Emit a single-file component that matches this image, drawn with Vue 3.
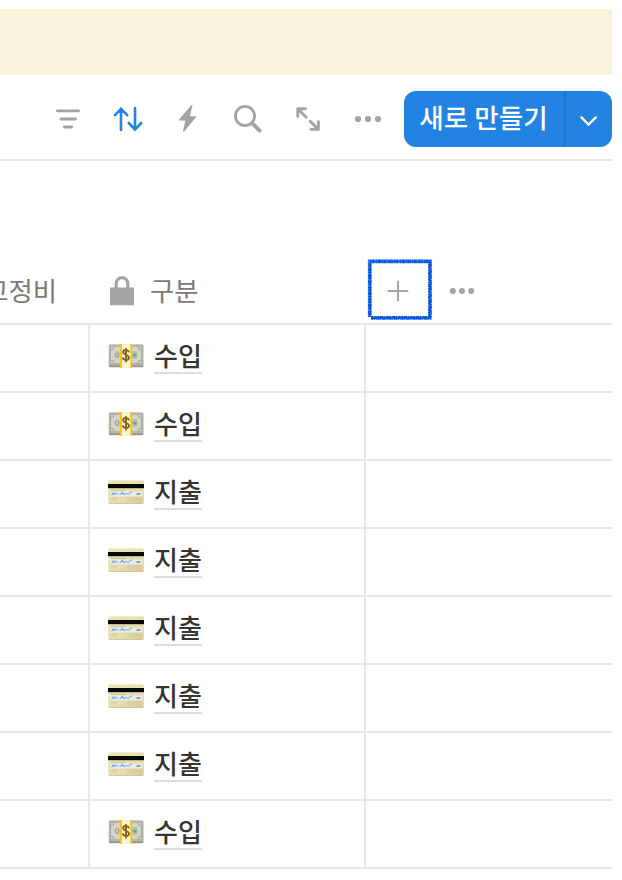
<script setup>
import {ref} from "vue"

const rows = ref([
  {id: 1, type: "수입"},
  {id: 2, type: "수입"},
  {id: 3, type: "지출"},
  {id: 4, type: "지출"},
  {id: 5, type: "지출"},
  {id: 6, type: "지출"},
  {id: 7, type: "지출"},
  {id: 8, type: "수입"},
])
</script>

<template>
  <div class="page">
    <div class="banner"></div>

    <div class="toolbar">
      <div class="toolbar__icons">
        <svg class="icon" viewBox="0 0 32 32">
          <path d="M5.4 7.8h21.2M8.9 16h14.6M12.4 24h7.2" stroke-width="2.8"/>
        </svg>
        <svg class="icon icon--active" viewBox="0 0 32 32">
          <path d="M9 27V5.6M3 12.2l6-6.4 6.2 6.4M23 5v21.8M16.8 20l6.2 6.6 6.2-6.6" stroke-width="2.6"/>
        </svg>
        <svg class="icon" viewBox="0 0 32 32">
          <path class="icon__fill" d="M19.3 2.2 7 16.6q-.4.9.5 1h5.9l-2.4 10.4q.3 1.3 1.2.4L24 14.2q.5-.9-.5-1h-5.7l2.7-10.4q-.2-1.1-1.2-.6z"/>
        </svg>
        <svg class="icon" viewBox="0 0 32 32">
          <circle cx="13" cy="13" r="9.6" stroke-width="2.8"/>
          <path d="m20.4 20.4 7.2 7.2" stroke-width="3.8"/>
        </svg>
        <svg class="icon" viewBox="0 0 32 32">
          <path d="M13.4 5.8H5.8v7.6M6 6l8.2 8.2M18.2 18.2l8.2 8.2M26.4 18.8v7.6h-7.6" stroke-width="2.9"/>
        </svg>
        <svg class="icon" viewBox="0 0 32 32">
          <g class="icon__fill">
            <circle cx="6" cy="16" r="3.1"/>
            <circle cx="16" cy="16" r="3.1"/>
            <circle cx="26" cy="16" r="3.1"/>
          </g>
        </svg>
      </div>
      <div class="new-button">
        <button class="new-button__main">새로 만들기</button>
        <button class="new-button__more">
          <svg width="20" height="14" viewBox="0 0 20 14">
            <path d="m2.4 3.4 7.2 7.2 7.2-7.2" fill="none" stroke="#fff" stroke-width="2.4" stroke-linecap="round"/>
          </svg>
        </button>
      </div>
    </div>

    <div class="table">
      <div class="table__head">
        <div class="head-cell head-cell--first"><span>고정비</span></div>
        <div class="head-cell head-cell--type">
          <svg width="26" height="32" viewBox="0 0 26 32">
            <path d="M7.2 14V8.4a5.8 5.8 0 0 1 11.6 0V14" fill="none" stroke="#a5a4a2" stroke-width="3.2"/>
            <rect x="1" y="12.4" width="24" height="17.8" rx=".6" fill="#a5a4a2"/>
          </svg>
          <span>구분</span>
        </div>
        <div class="head-cell head-cell--tools">
          <button class="add">
            <svg width="22" height="22" viewBox="0 0 22 22">
              <path d="M11 1.5v19M1.5 11h19" stroke="#a5a4a2" stroke-width="2" stroke-linecap="round"/>
            </svg>
            <!-- crayon outline around the add button -->
            <svg class="add__mark" viewBox="0 0 68 66">
              <path d="M2.4 4.4H65.4M64 3V61.2M65.4 60.8H5M3.8 60V3"/>
              <path class="add__grain" d="M3 2.9H65M3 6H62M65.6 4V62M62.3 6V59M64 62.5H5M62 59.3H6M2.2 59V4M5.4 59V6" stroke-dasharray="1 1.6 .6 2.4 1.4 1.2 .7 3.1"/>
              <path class="add__grain add__grain--soft" d="M5 4.3H62M64.1 6V59M62 60.9H6M3.7 59V6" stroke-dasharray=".6 4.1 .9 6.3 .5 2.8"/>
            </svg>
          </button>
          <svg class="dots" width="28" height="8" viewBox="0 0 28 8">
            <circle cx="4.8" cy="4" r="3"/>
            <circle cx="14" cy="4" r="3"/>
            <circle cx="23.2" cy="4" r="3"/>
          </svg>
        </div>
      </div>

      <div v-for="row in rows" :key="row.id" class="table__row">
        <div class="cell cell--first"></div>
        <div class="cell cell--type">
          <svg v-if="row.type === '수입'" class="emoji" viewBox="0 0 36 24">
            <rect x=".8" y=".8" width="34.6" height="22.4" rx="1" fill="#98978b"/>
            <rect x="1" y=".6" width="34" height="20.6" rx=".6" fill="#b9b9ac"/>
            <rect x="2.6" y="2.2" width="30.8" height="17.6" fill="#d6d5c8" stroke="#a3a397" stroke-width=".8"/>
            <path d="M3 6q3 0 3-3.4M33 6q-3 0-3-3.4M3 16q3 0 3 3.6M33 16q-3 0-3 3.6" fill="none" stroke="#9c9e93"/>
            <ellipse cx="9.2" cy="11" rx="2.8" ry="4" fill="#c0c1b4"/>
            <circle cx="9.2" cy="11" r="1.5" fill="#e4e4db" stroke="#85877f" stroke-width=".8"/>
            <ellipse cx="26.8" cy="11" rx="3" ry="4" fill="#b4bcae"/>
            <circle cx="26.8" cy="11.2" r="1.6" fill="#6aab87"/>
            <rect x="12" y=".2" width="12.2" height="23.6" fill="#fbbf10"/>
            <rect x="13.9" y=".2" width="8.4" height="23.6" fill="#fff6d6"/>
            <path d="M18 4.2v14M21 8.4c-.4-3-5.8-3.1-5.9-.3 0 3.1 6.1 2.4 5.9 5.6-.2 3.1-5.9 2.9-6.2-.3" fill="none" stroke="#87641a" stroke-width="1.9"/>
          </svg>
          <svg v-else class="emoji" viewBox="0 0 36 24">
            <defs>
              <linearGradient id="card" x1="0" y1="0" x2="1" y2="1">
                <stop offset="0" stop-color="#efe5b0"/>
                <stop offset=".55" stop-color="#e8dfb0"/>
                <stop offset="1" stop-color="#d8cd9b"/>
              </linearGradient>
            </defs>
            <rect x=".2" y=".2" width="35.6" height="23.6" rx="1.5" fill="url(#card)"/>
            <path d="M1 .7h34" stroke="#f3edcd" stroke-width=".8"/>
            <rect y="4" width="36" height="4.2" fill="#080808"/>
            <path d="M3 10.3h15" stroke="#aba584" stroke-width=".6" stroke-dasharray="1.4 .4"/>
            <rect x="2.4" y="11.4" width="32" height="5" fill="#e8edf0"/>
            <path d="M3.8 15.3c2-3.6 2.1-3.5 1.5-.8 1.4-1.7 1.7-1.6 2 0 1-2 1.8-1.5 2.5.1M11.8 15l2.6-3.1.6 3c1-2 1.9-1.6 2.4-.2 1-2 2-1.2 2.8 0 1.4-2.3 2.4-1.9 3.6-3" fill="none" stroke="#6e96d2" stroke-width="1"/>
            <path d="M28.4 14h4" stroke="#7b7d86" stroke-width="1.5"/>
            <path d="M3 18h7M3 20h6M19 18h14M19 20h14" stroke="#c9bf94" stroke-width=".6"/>
            <path d="M1 23.4h34" stroke="#b9b084" stroke-width=".6"/>
          </svg>
          <span class="link">{{ row.type }}</span>
        </div>
        <div class="cell"></div>
      </div>
    </div>
  </div>
</template>

<style>
body {
  margin: 0;
  background: #fff;
}
</style>

<style scoped>
.page {
  width: 612px;
  height: 880px;
  padding-top: 9px;
  box-sizing: border-box;
  overflow: hidden;
  font-family: "Noto Sans CJK KR", sans-serif;
}

button {
  padding: 0;
  border: 0;
  background: none;
  font: inherit;
}

.banner {
  height: 66px;
  background: #fbf2dc;
}

.toolbar {
  display: flex;
  justify-content: space-between;
  align-items: center;
  height: 86px;
  padding-top: 2px;
  padding-left: 52px;
  box-sizing: border-box;
  border-bottom: 2px solid #e9e9e8;
}

.toolbar__icons {
  display: flex;
  gap: 28px;
}

.icon {
  width: 32px;
  height: 32px;
  margin-top: 2px;
  fill: none;
  stroke: #a5a4a2;
  stroke-linecap: round;
  stroke-linejoin: round;
}

.icon--active {
  stroke: #2383e2;
}

.icon__fill {
  fill: #a5a4a2;
  stroke: none;
}

.new-button {
  display: flex;
  width: 208px;
  height: 56px;
  margin-top: 2px;
  border-radius: 12px;
  overflow: hidden;
  background: #2383e2;
}

.new-button__main {
  width: 160px;
  padding-right: 1px;
  padding-bottom: 4px;
  color: #fff;
  font-size: 26.6px;
  font-weight: 500;
  line-height: 52px;
  white-space: nowrap;
}

.new-button__more {
  display: flex;
  flex: 1;
  align-items: center;
  justify-content: center;
  padding-top: 3px;
  border-left: 2px solid #2076cb;
}

.table {
  padding-top: 98px;
}

.table__head {
  display: flex;
  height: 66px;
  box-sizing: border-box;
  border-bottom: 2px solid #e9e9e8;
}

.head-cell {
  display: flex;
  align-items: center;
  box-sizing: border-box;
  color: #7d7a75;
  font-size: 26.4px;
}

.head-cell span {
  padding-bottom: 3px;
  line-height: 61px;
}

.head-cell--first {
  justify-content: flex-end;
  width: 90px;
  padding-right: 33px;
  overflow: hidden;
}

.head-cell--first span {
  flex-shrink: 0;
}

.head-cell--type {
  gap: 15px;
  width: 276px;
  padding-left: 19px;
}

.head-cell--tools {
  gap: 18px;
}

.add {
  position: relative;
  display: flex;
  align-items: center;
  justify-content: center;
  width: 64px;
  height: 64px;
}

.add__mark {
  position: absolute;
  top: -2px;
  left: 0;
  width: 68px;
  height: 66px;
  overflow: visible;
  fill: none;
  stroke: #0757de;
  stroke-width: 3.8;
}

.add__grain {
  stroke: #fff;
  stroke-width: .8;
  opacity: .8;
}

.add__grain--soft {
  opacity: .45;
}

.dots {
  fill: #a5a4a2;
}

.table__row {
  display: flex;
  height: 68px;
}

.cell {
  flex: 1;
  box-sizing: border-box;
  border-bottom: 2px solid #e9e9e8;
}

.cell--first {
  flex: none;
  width: 90px;
  border-right: 2px solid #e9e9e8;
}

.cell--type {
  display: flex;
  flex: none;
  align-items: flex-start;
  gap: 10px;
  width: 276px;
  padding: 15px 0 0 18px;
  border-right: 2px solid #e9e9e8;
}

.emoji {
  width: 36px;
  height: 24px;
  margin-top: 4px;
}

.link {
  height: 34px;
  box-sizing: border-box;
  border-bottom: 2px solid #dededc;
  color: #373530;
  font-size: 26px;
  font-weight: 500;
  line-height: 30px;
}
</style>
